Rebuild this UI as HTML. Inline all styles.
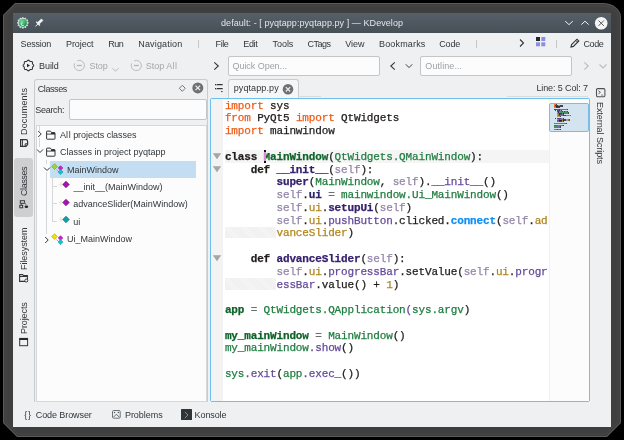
<!DOCTYPE html><html><head><meta charset="utf-8"><style>
html,body{margin:0;padding:0;width:624px;height:440px;overflow:hidden;background:#000;}
.b{position:absolute;}
.t{position:absolute;white-space:pre;line-height:1;font-family:"Liberation Sans",sans-serif;}
.c{position:absolute;white-space:pre;font-family:"Liberation Mono",monospace;}
</style></head><body><div style="position:absolute;left:0;top:0;width:624px;height:440px;will-change:transform"><svg class="b" style="left:0;top:0" width="624" height="440"><path d="M15 3 L603 3 C612 3 621 9 621 17 L621 423 L607 437 L17 437 L3 423 L3 15 Z" fill="#5a5a5a"/><path d="M15.4 4 L603 4 C611.5 4 620 9.5 620 17 L620 422.6 L606.6 436 L17.4 436 L4 422.6 L4 15.4 Z" fill="#3f3f3f"/><path d="M16 6 L603 6 C610 6 618 11 618 17.5 L618 422 L606 434 L18 434 L6 422 L6 16 Z" fill="none" stroke="#474747" stroke-width="1"/></svg><div class="b" style="left:13px;top:13px;width:598px;height:414px;background:#eff0f1"></div><div class="b" style="left:13px;top:13px;width:598px;height:20px;background:linear-gradient(#566069,#474f56)"></div><svg class="b" style="left:16px;top:16px" width="14" height="14" viewBox="0 0 14 14"><defs><radialGradient id="kg" cx="0.35" cy="0.3" r="0.8"><stop offset="0" stop-color="#6fdc9c"/><stop offset="1" stop-color="#168a48"/></radialGradient></defs><rect x="6.15" y="1.05" width="1.4" height="1.7" fill="#d4d5d6" transform="rotate(0 6.85 6.85)"/><rect x="6.15" y="1.05" width="1.4" height="1.7" fill="#d4d5d6" transform="rotate(30 6.85 6.85)"/><rect x="6.15" y="1.05" width="1.4" height="1.7" fill="#d4d5d6" transform="rotate(60 6.85 6.85)"/><rect x="6.15" y="1.05" width="1.4" height="1.7" fill="#d4d5d6" transform="rotate(90 6.85 6.85)"/><rect x="6.15" y="1.05" width="1.4" height="1.7" fill="#d4d5d6" transform="rotate(120 6.85 6.85)"/><rect x="6.15" y="1.05" width="1.4" height="1.7" fill="#d4d5d6" transform="rotate(150 6.85 6.85)"/><rect x="6.15" y="1.05" width="1.4" height="1.7" fill="#d4d5d6" transform="rotate(180 6.85 6.85)"/><rect x="6.15" y="1.05" width="1.4" height="1.7" fill="#d4d5d6" transform="rotate(210 6.85 6.85)"/><rect x="6.15" y="1.05" width="1.4" height="1.7" fill="#d4d5d6" transform="rotate(240 6.85 6.85)"/><rect x="6.15" y="1.05" width="1.4" height="1.7" fill="#d4d5d6" transform="rotate(270 6.85 6.85)"/><rect x="6.15" y="1.05" width="1.4" height="1.7" fill="#d4d5d6" transform="rotate(300 6.85 6.85)"/><rect x="6.15" y="1.05" width="1.4" height="1.7" fill="#d4d5d6" transform="rotate(330 6.85 6.85)"/><circle cx="6.85" cy="6.85" r="4.9" fill="#e4e5e6"/><circle cx="6.85" cy="6.85" r="4.1" fill="url(#kg)"/><path d="M7.8 9.7 Q5.2 10.2 5.1 7.9 Q5.3 6.5 6.7 6.9" stroke="#d8f3e2" stroke-width="1" fill="none"/></svg><svg class="b" style="left:34px;top:18px" width="10" height="10" viewBox="0 0 10 10"><path d="M1.5 8.4 L4 5.9" stroke="#f4f4f4" stroke-width="1"/><path d="M2.3 3.8 L5.9 7.4" stroke="#f4f4f4" stroke-width="1.4"/><path d="M3.6 4.6 L5.1 6.1 L8.9 2.5 L7.4 1 Z" fill="#f4f4f4" stroke="#f4f4f4" stroke-width="0.8" stroke-linejoin="round"/></svg><div class="t" style="left:221.00px;top:19.00px;font-size:9.0px;color:#e3e5e7;letter-spacing:0.067px;">default: - [ pyqtapp:pyqtapp.py ] — KDevelop</div><svg class="b" style="left:564px;top:19px" width="11" height="8" viewBox="0 0 11 8"><path d="M1.2 2.2 L5 5.6 L8.8 2.2" stroke="#eff0f1" stroke-width="1" fill="none"/></svg><svg class="b" style="left:580px;top:19px" width="11" height="8" viewBox="0 0 11 8"><path d="M1.3 5.6 L5 2.2 L8.7 5.6" stroke="#eff0f1" stroke-width="1" fill="none"/></svg><svg class="b" style="left:594px;top:16px" width="14" height="14" viewBox="0 0 14 14"><circle cx="7.2" cy="7.2" r="6.3" fill="#f4f5f5"/><path d="M4.5 4.5 L9.9 9.9 M9.9 4.5 L4.5 9.9" stroke="#525a61" stroke-width="1"/></svg><div class="t" style="left:20.60px;top:40.00px;font-size:9.0px;color:#31363b;letter-spacing:-0.217px;">Session</div><div class="t" style="left:66.00px;top:40.00px;font-size:9.0px;color:#31363b;letter-spacing:-0.067px;">Project</div><div class="t" style="left:108.30px;top:40.00px;font-size:9.0px;color:#31363b;letter-spacing:-0.550px;">Run</div><div class="t" style="left:138.30px;top:40.00px;font-size:9.0px;color:#31363b;letter-spacing:0.161px;">Navigation</div><div class="t" style="left:215.60px;top:40.00px;font-size:9.0px;color:#31363b;letter-spacing:-0.433px;">File</div><div class="t" style="left:243.30px;top:40.00px;font-size:9.0px;color:#31363b;letter-spacing:-0.367px;">Edit</div><div class="t" style="left:272.60px;top:40.00px;font-size:9.0px;color:#31363b;letter-spacing:-0.075px;">Tools</div><div class="t" style="left:307.50px;top:40.00px;font-size:9.0px;color:#31363b;letter-spacing:-0.500px;">CTags</div><div class="t" style="left:345.30px;top:40.00px;font-size:9.0px;color:#31363b;letter-spacing:-0.067px;">View</div><div class="t" style="left:379.00px;top:40.00px;font-size:9.0px;color:#31363b;letter-spacing:0.162px;">Bookmarks</div><div class="t" style="left:439.30px;top:40.00px;font-size:9.0px;color:#31363b;letter-spacing:-0.200px;">Code</div><div class="b" style="left:198px;top:40px;width:1px;height:8px;background:#c4c6c8"></div><div class="b" style="left:476px;top:40px;width:1px;height:8px;background:#c4c6c8"></div><div class="b" style="left:556px;top:40px;width:1px;height:8px;background:#c4c6c8"></div><svg class="b" style="left:518px;top:38px" width="8" height="10" viewBox="0 0 8 10"><path d="M2 1.5 L5.5 5 L2 8.5" stroke="#31363b" stroke-width="1.1" fill="none"/></svg><svg class="b" style="left:535px;top:36px" width="12" height="12" viewBox="0 0 12 12"><rect x="1" y="1" width="4" height="4" fill="#232629"/><rect x="6.3" y="1" width="4" height="4" fill="#8b8fe0"/><rect x="1" y="6.3" width="4" height="4" fill="#8b8fe0"/><rect x="6.3" y="6.3" width="4" height="4" fill="#8b8fe0"/></svg><svg class="b" style="left:569px;top:37px" width="12" height="12" viewBox="0 0 12 12"><path d="M2 10 L2.6 7.6 L8 2.2 L9.8 4 L4.4 9.4 Z" fill="none" stroke="#31363b" stroke-width="1.1"/><path d="M6.8 3.4 L8.6 5.2" stroke="#31363b" stroke-width="1"/></svg><div class="t" style="left:583.40px;top:40.00px;font-size:9.0px;color:#31363b;letter-spacing:-0.367px;">Code</div><svg class="b" style="left:21px;top:59px" width="14" height="14" viewBox="0 0 14 14"><polygon points="12.75,6.50 12.48,7.17 11.92,7.71 11.51,8.20 11.45,8.84 11.47,9.62 11.18,10.28 10.52,10.57 9.74,10.55 9.10,10.61 8.61,11.02 8.07,11.58 7.40,11.85 6.73,11.58 6.19,11.02 5.70,10.61 5.06,10.55 4.28,10.57 3.62,10.28 3.33,9.62 3.35,8.84 3.29,8.20 2.88,7.71 2.32,7.17 2.05,6.50 2.32,5.83 2.88,5.29 3.29,4.80 3.35,4.16 3.33,3.38 3.62,2.72 4.28,2.43 5.06,2.45 5.70,2.39 6.19,1.98 6.73,1.42 7.40,1.15 8.07,1.42 8.61,1.98 9.10,2.39 9.74,2.45 10.52,2.43 11.18,2.72 11.47,3.38 11.45,4.16 11.51,4.80 11.92,5.29 12.48,5.83" fill="none" stroke="#31363b" stroke-width="1.05"/><path d="M6 4.7 L9 6.5 L6 8.3 Z" fill="#232629"/></svg><div class="t" style="left:39.00px;top:62.00px;font-size:9.0px;color:#31363b;letter-spacing:-0.050px;">Build</div><svg class="b" style="left:72px;top:59px" width="14" height="14" viewBox="0 0 14 14"><path d="M5.14 1.88 A5.1 5.1 0 1 1 2.68 4.34" fill="none" stroke="#b9bbbd" stroke-width="1"/><path d="M4.8 6.5 L9.8 6.5" stroke="#b3b5b7" stroke-width="1.3"/></svg><div class="t" style="left:89.60px;top:62.00px;font-size:9.0px;color:#a5a7a9;letter-spacing:-0.133px;">Stop</div><svg class="b" style="left:111px;top:67px" width="9" height="6" viewBox="0 0 9 6"><path d="M1.5 1.2 L4.5 4.2 L7.5 1.2" stroke="#b5b7b9" stroke-width="1" fill="none"/></svg><svg class="b" style="left:128.5px;top:59px" width="14" height="14" viewBox="0 0 14 14"><path d="M5.14 1.88 A5.1 5.1 0 1 1 2.68 4.34" fill="none" stroke="#b9bbbd" stroke-width="1"/><path d="M4.8 6.5 L9.8 6.5" stroke="#b3b5b7" stroke-width="1.3"/></svg><div class="t" style="left:145.70px;top:62.00px;font-size:9.0px;color:#a5a7a9;letter-spacing:0.029px;">Stop A<span style="letter-spacing:0.7px">l</span>l</div><svg class="b" style="left:212px;top:61px" width="9" height="10" viewBox="0 0 9 10"><path d="M2.3 1.3 L6.3 5 L2.3 8.7" stroke="#31363b" stroke-width="1.1" fill="none"/></svg><div class="b" style="left:228px;top:56px;width:152px;height:20px;background:#fcfcfc;border:1px solid #c3c5c7;border-radius:2px;box-sizing:border-box"></div><div class="t" style="left:232.50px;top:62.00px;font-size:9.0px;color:#9fa1a3;letter-spacing:-0.046px;">Quick Open...</div><svg class="b" style="left:388px;top:61px" width="9" height="10" viewBox="0 0 9 10"><path d="M6.8 1.3 L2.8 5 L6.8 8.7" stroke="#31363b" stroke-width="1.1" fill="none"/></svg><svg class="b" style="left:404px;top:63px" width="10" height="7" viewBox="0 0 10 7"><path d="M1.8 1.3 L5 4.6 L8.2 1.3" stroke="#31363b" stroke-width="0.95" fill="none"/></svg><div class="b" style="left:420px;top:56px;width:152px;height:20px;background:#fcfcfc;border:1px solid #c3c5c7;border-radius:2px;box-sizing:border-box"></div><div class="t" style="left:425.30px;top:62.00px;font-size:9.0px;color:#9fa1a3;letter-spacing:0.089px;">Outline...</div><svg class="b" style="left:582px;top:61px" width="9" height="10" viewBox="0 0 9 10"><path d="M2.3 1.3 L6.3 5 L2.3 8.7" stroke="#b9bbbd" stroke-width="1.1" fill="none"/></svg><svg class="b" style="left:598px;top:63px" width="10" height="7" viewBox="0 0 10 7"><path d="M1.5 1.5 L5 5 L8.5 1.5" stroke="#b9bbbd" stroke-width="1.1" fill="none"/></svg><div class="b" style="left:14px;top:158px;width:19px;height:59px;background:#cdcfd1;border-radius:3px"></div><div class="t" style="left:28.2px;top:134.5px;font-size:9.0px;color:#31363b;letter-spacing:0.175px;transform-origin:0 0;transform:rotate(-90deg) translate(-0.00px,-7.62px)">Documents</div><div class="t" style="left:28.2px;top:195.5px;font-size:9.0px;color:#31363b;letter-spacing:-0.417px;transform-origin:0 0;transform:rotate(-90deg) translate(-0.00px,-7.62px)">Classes</div><div class="t" style="left:28.2px;top:269.5px;font-size:9.0px;color:#31363b;letter-spacing:-0.056px;transform-origin:0 0;transform:rotate(-90deg) translate(-0.00px,-7.62px)">Filesystem</div><div class="t" style="left:28.2px;top:333.6px;font-size:9.0px;color:#31363b;letter-spacing:-0.100px;transform-origin:0 0;transform:rotate(-90deg) translate(-0.00px,-7.62px)">Projects</div><svg class="b" style="left:18px;top:137px" width="11" height="11" viewBox="0 0 11 11"><path d="M2.6 2.6 L8 2.6 Q9.6 2.6 9.6 4.4 L9.6 7.6 L8 9.4 L2.6 9.4 Z" fill="none" stroke="#31363b" stroke-width="1.2"/><path d="M4.4 2.6 L4.4 9.4" stroke="#31363b" stroke-width="1"/><path d="M7.2 9.4 L7.2 6.8 L9.6 6.8" fill="none" stroke="#31363b" stroke-width="1"/></svg><svg class="b" style="left:18px;top:199px" width="11" height="11" viewBox="0 0 11 11"><rect x="2.3" y="1.7" width="4.2" height="2.6" fill="none" stroke="#31363b" stroke-width="0.95"/><rect x="1.8" y="6.3" width="2.9" height="2.5" fill="none" stroke="#31363b" stroke-width="0.95"/><ellipse cx="8.4" cy="7.7" rx="1.8" ry="1.25" fill="#232629"/><path d="M3.3 4.3 L3.3 6.3" stroke="#31363b" stroke-width="0.8"/><path d="M6.5 3 L8.2 6.4" stroke="#6a6d70" stroke-width="0.9"/></svg><svg class="b" style="left:18px;top:273px" width="11" height="11" viewBox="0 0 11 11"><path d="M1.6 1.5 L4.6 1.5 L5.6 2.6 L9.4 2.6 L9.4 8.4 L1.6 8.4 Z" fill="none" stroke="#31363b" stroke-width="1.1"/><path d="M1.6 3.4 L9.4 3.4" stroke="#31363b" stroke-width="1.2"/><circle cx="8.3" cy="7.6" r="1.5" fill="#eff0f1" stroke="#31363b" stroke-width="0.9"/></svg><svg class="b" style="left:18px;top:337px" width="11" height="11" viewBox="0 0 11 11"><rect x="1.7" y="1.4" width="7.9" height="7.3" fill="none" stroke="#31363b" stroke-width="1"/><rect x="1.5" y="1.2" width="8.3" height="1.8" fill="#232629"/></svg><div class="b" style="left:34px;top:79px;width:174px;height:323px;border:1px solid #c9cbcd;border-bottom:none;border-radius:3px 3px 0 0;box-sizing:border-box;background:#eff0f1"></div><div class="t" style="left:37.70px;top:85.00px;font-size:9.0px;color:#31363b;letter-spacing:-0.400px;">Classes</div><svg class="b" style="left:178px;top:84px" width="9" height="9" viewBox="0 0 9 9"><path d="M4.3 1.3 L7.3 4.3 L4.3 7.3 L1.3 4.3 Z" fill="none" stroke="#5d6064" stroke-width="0.85"/></svg><svg class="b" style="left:191px;top:81px" width="14" height="14" viewBox="0 0 14 14"><circle cx="6.8" cy="6.9" r="5.5" fill="#6e7174"/><path d="M4.5 4.6 L9.1 9.2 M9.1 4.6 L4.5 9.2" stroke="#eff0f1" stroke-width="1.2"/></svg><div class="t" style="left:35.30px;top:106.00px;font-size:9.0px;color:#31363b;letter-spacing:-0.300px;">Search:</div><div class="b" style="left:69px;top:99px;width:138px;height:21px;background:#fcfcfc;border:1px solid #c3c5c7;border-radius:2px;box-sizing:border-box"></div><div class="b" style="left:36px;top:125px;width:171px;height:277px;background:#fcfcfc;border:1px solid #d5d7d9;box-sizing:border-box"></div><div class="b" style="left:50px;top:160.5px;width:146px;height:17.19999999999999px;background:#c3def3"></div><div class="b" style="left:39px;top:126px;width:1px;height:5px;background:#d4d5d6"></div><div class="b" style="left:39px;top:138px;width:1px;height:9px;background:#d4d5d6"></div><div class="b" style="left:46px;top:160px;width:1px;height:4px;background:#d4d5d6"></div><div class="b" style="left:46px;top:172px;width:1px;height:62px;background:#d6d7d8"></div><div class="b" style="left:52px;top:178px;width:1px;height:44px;background:#d6d7d8"></div><div class="b" style="left:53px;top:186px;width:4px;height:1px;background:#d6d7d8"></div><div class="b" style="left:53px;top:203px;width:4px;height:1px;background:#d6d7d8"></div><div class="b" style="left:53px;top:221px;width:4px;height:1px;background:#d6d7d8"></div><svg class="b" style="left:37px;top:130.2px" width="6" height="8" viewBox="0 0 6 8"><path d="M1.2 1 L4.2 4 L1.2 7" stroke="#31363b" stroke-width="1" fill="none"/></svg><svg class="b" style="left:36px;top:148px" width="8" height="7" viewBox="0 0 8 7"><path d="M1 1.5 L4 4.5 L7 1.5" stroke="#31363b" stroke-width="1" fill="none"/></svg><svg class="b" style="left:42.5px;top:166px" width="8" height="7" viewBox="0 0 8 7"><path d="M1 1.5 L4 4.5 L7 1.5" stroke="#31363b" stroke-width="1" fill="none"/></svg><svg class="b" style="left:43.5px;top:235.5px" width="6" height="8" viewBox="0 0 6 8"><path d="M1.2 1 L4.2 4 L1.2 7" stroke="#31363b" stroke-width="1" fill="none"/></svg><svg class="b" style="left:45.5px;top:129.5px" width="10" height="10" viewBox="0 0 10 10"><path d="M1.1 1.1 L4.4 1.1 L5.5 2.6 L8.5 2.6 Q9 2.6 9 3.1 L9 8.7 Q9 9.2 8.5 9.2 L1.1 9.2 Q0.6 9.2 0.6 8.7 L0.6 1.6 Q0.6 1.1 1.1 1.1 Z" fill="none" stroke="#31363b" stroke-width="1"/><path d="M5 3.3 L9 3.3" stroke="#232629" stroke-width="1.3"/><path d="M0.6 4.1 L9 4.1" stroke="#31363b" stroke-width="0.9"/></svg><svg class="b" style="left:45.5px;top:146.5px" width="10" height="10" viewBox="0 0 10 10"><path d="M1.1 1.1 L4.4 1.1 L5.5 2.6 L8.5 2.6 Q9 2.6 9 3.1 L9 8.7 Q9 9.2 8.5 9.2 L1.1 9.2 Q0.6 9.2 0.6 8.7 L0.6 1.6 Q0.6 1.1 1.1 1.1 Z" fill="none" stroke="#31363b" stroke-width="1"/><path d="M5 3.3 L9 3.3" stroke="#232629" stroke-width="1.3"/><path d="M0.6 4.1 L9 4.1" stroke="#31363b" stroke-width="0.9"/></svg><svg class="b" style="left:50px;top:162px" width="14" height="14" viewBox="0 0 14 14"><path d="M6.5 7.5 L8.5 9.5" stroke="#9aa8b0" stroke-width="1"/><path d="M4.5 1.6999999999999997 L7.4 4.6 L4.5 7.5 L1.6 4.6 Z" fill="#a0d040" stroke="#70a020" stroke-width="0.6"/><path d="M10.5 3.7 L12.8 6 L10.5 8.3 L8.2 6 Z" fill="#d020d0" stroke="#a000a0" stroke-width="0.6"/><path d="M10.5 7.6 L13.0 10.1 L10.5 12.6 L8.0 10.1 Z" fill="#10c4d4" stroke="#0898a8" stroke-width="0.6"/></svg><svg class="b" style="left:50px;top:232.3px" width="14" height="14" viewBox="0 0 14 14"><path d="M6.5 7.5 L8.5 9.5" stroke="#9aa8b0" stroke-width="1"/><path d="M4.5 1.6999999999999997 L7.4 4.6 L4.5 7.5 L1.6 4.6 Z" fill="#e8e010" stroke="#b0a800" stroke-width="0.6"/><path d="M10.5 3.7 L12.8 6 L10.5 8.3 L8.2 6 Z" fill="#d020d0" stroke="#a000a0" stroke-width="0.6"/><path d="M10.5 7.6 L13.0 10.1 L10.5 12.6 L8.0 10.1 Z" fill="#10c4d4" stroke="#0898a8" stroke-width="0.6"/></svg><svg class="b" style="left:58px;top:180.3px" width="14" height="10" viewBox="0 0 14 10"><path d="M1 4.4 L4.4 4.4 M1.6 5.9 L4 5.9" stroke="#ebe6a8" stroke-width="0.9"/><path d="M2.2 3 L3.8 3" stroke="#b8dce0" stroke-width="0.8"/><path d="M8 1.2000000000000002 L11.3 4.5 L8 7.8 L4.7 4.5 Z" fill="#a810b8" stroke="#600070" stroke-width="0.6"/></svg><svg class="b" style="left:58px;top:197.8px" width="14" height="10" viewBox="0 0 14 10"><path d="M1 4.4 L4.4 4.4 M1.6 5.9 L4 5.9" stroke="#ebe6a8" stroke-width="0.9"/><path d="M2.2 3 L3.8 3" stroke="#b8dce0" stroke-width="0.8"/><path d="M8 1.2000000000000002 L11.3 4.5 L8 7.8 L4.7 4.5 Z" fill="#a810b8" stroke="#600070" stroke-width="0.6"/></svg><svg class="b" style="left:58px;top:215.1px" width="14" height="10" viewBox="0 0 14 10"><path d="M1 4.4 L4.4 4.4 M1.6 5.9 L4 5.9" stroke="#ebe6a8" stroke-width="0.9"/><path d="M2.2 3 L3.8 3" stroke="#b8dce0" stroke-width="0.8"/><path d="M8 1.2000000000000002 L11.3 4.5 L8 7.8 L4.7 4.5 Z" fill="#10a0a8" stroke="#006068" stroke-width="0.6"/></svg><div class="t" style="left:60.10px;top:131.00px;font-size:9.0px;color:#31363b;letter-spacing:-0.050px;">A<span style="letter-spacing:0.7px">l</span>l projects classes</div><div class="t" style="left:60.00px;top:148.00px;font-size:9.0px;color:#31363b;letter-spacing:0.000px;">Classes in project pyqtapp</div><div class="t" style="left:66.90px;top:166.00px;font-size:9.0px;color:#31363b;letter-spacing:0.000px;">MainWindow</div><div class="t" style="left:73.45px;top:183.00px;font-size:9.0px;color:#31363b;letter-spacing:0.000px;">__init__(MainWindow)</div><div class="t" style="left:73.30px;top:200.00px;font-size:9.0px;color:#31363b;letter-spacing:0.000px;">advanceSlider(MainWindow)</div><div class="t" style="left:73.30px;top:218.00px;font-size:9.0px;color:#31363b;letter-spacing:0.000px;">ui</div><div class="t" style="left:66.90px;top:235.00px;font-size:9.0px;color:#31363b;letter-spacing:0.000px;">Ui_MainWindow</div><svg class="b" style="left:213px;top:82px" width="12" height="11" viewBox="0 0 12 11"><path d="M2 2.6 L9.7 2.6 M2 6.7 L9.7 6.7" stroke="#31363b" stroke-width="1.3"/><path d="M3 2.6 L3.6 2.6 M3 6.7 L3.6 6.7" stroke="#eff0f1" stroke-width="1.3"/><path d="M8 9.6 L9.7 9.6" stroke="#31363b" stroke-width="0.9"/></svg><div class="b" style="left:228px;top:79px;width:71px;height:20px;background:#f5f6f7;border:1px solid #c9cbcd;border-bottom:none;border-radius:3px 3px 0 0;box-sizing:border-box"></div><div class="t" style="left:233.70px;top:84.00px;font-size:9.0px;color:#31363b;letter-spacing:0.106px;">pyqtapp.py</div><svg class="b" style="left:281px;top:82px" width="14" height="14" viewBox="0 0 14 14"><circle cx="7" cy="7.3" r="5.3" fill="#6e7174"/><path d="M4.8 5.1 L9.2 9.5 M9.2 5.1 L4.8 9.5" stroke="#eff0f1" stroke-width="1.2"/></svg><div class="t" style="left:536.40px;top:84.00px;font-size:9.0px;color:#31363b;letter-spacing:-0.112px;">Line: 5 Col: 7</div><div class="b" style="left:210px;top:98px;width:380px;height:304px;background:#fff;border:1px solid #6cc0ee;border-radius:2px;box-sizing:border-box"></div><div class="b" style="left:298px;top:96px;width:23px;height:1px;background:#d9dbdd"></div><div class="b" style="left:507px;top:96px;width:81px;height:1px;background:#d9dbdd"></div><div class="b" style="left:211px;top:99px;width:12px;height:302px;background:#f3f3f3"></div><div class="b" style="left:549px;top:99px;width:40px;height:302px;background:#fcfcfc;border-left:1px solid #f1f1f1;box-sizing:border-box"></div><div class="b" style="left:549px;top:103px;width:40px;height:29px;background:#d3e3ef;border:1px solid #79bde6;border-radius:2px;box-sizing:border-box"></div><svg class="b" style="left:595px;top:87px" width="12" height="12" viewBox="0 0 12 12"><rect x="1.5" y="1.6" width="8.4" height="8.1" rx="1.2" fill="none" stroke="#4d5054" stroke-width="1.05"/><path d="M3.4 3.7 L5.4 5.3 L3.4 6.9" fill="none" stroke="#4d5054" stroke-width="0.9"/><path d="M6 8.1 L8.2 8.1" stroke="#6d7074" stroke-width="0.8"/></svg><div class="t" style="left:596.4px;top:101.6px;font-size:9.0px;color:#31363b;letter-spacing:-0.067px;transform-origin:0 0;transform:rotate(90deg) translate(-0.00px,-7.62px)">External Scripts</div><div class="t" style="left:24.20px;top:411.00px;font-size:9.0px;color:#31363b;letter-spacing:0.800px;">{}</div><div class="t" style="left:35.80px;top:411.00px;font-size:9.0px;color:#31363b;letter-spacing:-0.091px;">Code Browser</div><svg class="b" style="left:111px;top:409px" width="11" height="11" viewBox="0 0 11 11"><rect x="1.5" y="1.5" width="7.7" height="7.7" rx="1.2" fill="none" stroke="#6f7275" stroke-width="1"/><circle cx="3.5" cy="3.5" r="0.75" fill="#55585b"/><circle cx="7.3" cy="3.5" r="0.75" fill="#55585b"/><path d="M2.6 8 L5.4 5.2 L8.1 8" fill="none" stroke="#55585b" stroke-width="0.9"/></svg><div class="t" style="left:124.90px;top:411.00px;font-size:9.0px;color:#31363b;letter-spacing:-0.014px;">Problems</div><div class="b" style="left:181px;top:409px;width:11px;height:11px;background:#2f3437;border-radius:0.5px"></div><svg class="b" style="left:181px;top:409px" width="11" height="11" viewBox="0 0 11 11"><path d="M3.9 2.9 L7 6 L3.9 9" stroke="#8d9a9b" stroke-width="0.9" fill="none"/></svg><div class="t" style="left:194.60px;top:411.00px;font-size:9.0px;color:#31363b;letter-spacing:-0.100px;">Konsole</div><div class="b" style="left:224.5px;top:149.8px;width:324.5px;height:12.9px;background:#f5f5f5"></div><div class="b" style="left:224.5px;top:226.80px;width:51.5px;height:11.6px;background:repeating-linear-gradient(45deg,#efefef 0 1px,#f6f6f6 1px 2px)"></div><div class="b" style="left:224.5px;top:277.92px;width:51.5px;height:11.6px;background:repeating-linear-gradient(45deg,#efefef 0 1px,#f6f6f6 1px 2px)"></div><svg class="b" style="left:212px;top:152.72px" width="10" height="8"><path d="M0.8 0.3 L9.2 0.3 L5 6.2 Z" fill="#a3a5a7"/></svg><svg class="b" style="left:212px;top:165.50px" width="10" height="8"><path d="M0.8 0.3 L9.2 0.3 L5 6.2 Z" fill="#a3a5a7"/></svg><svg class="b" style="left:212px;top:254.96px" width="10" height="8"><path d="M0.8 0.3 L9.2 0.3 L5 6.2 Z" fill="#a3a5a7"/></svg><div class="b" style="left:0;top:0;width:549px;height:440px;overflow:hidden;will-change:transform"><div class="c" style="left:224.9px;top:98.67px;font-size:11.0px;line-height:14px;-webkit-text-stroke:0.25px;letter-spacing:-0.148px"><span style="color:#f05a14">import</span><span style="color:#1f1c1b"> sys</span></div><div class="c" style="left:224.9px;top:111.45px;font-size:11.0px;line-height:14px;-webkit-text-stroke:0.25px;letter-spacing:-0.148px"><span style="color:#f05a14">from</span><span style="color:#1f1c1b"> PyQt5 </span><span style="color:#f05a14">import</span><span style="color:#1f1c1b"> QtWidgets</span></div><div class="c" style="left:224.9px;top:124.23px;font-size:11.0px;line-height:14px;-webkit-text-stroke:0.25px;letter-spacing:-0.148px"><span style="color:#f05a14">import</span><span style="color:#1f1c1b"> mainwindow</span></div><div class="c" style="left:224.9px;top:149.79px;font-size:11.0px;line-height:14px;-webkit-text-stroke:0.25px;letter-spacing:-0.148px"><span style="color:#1f1c1b;font-weight:bold">class</span><span style="color:#1f1c1b"> </span><span style="color:#0f6229;font-weight:bold">MainWindow</span><span style="color:#1f1c1b">(</span><span style="color:#1f7d40">QtWidgets.QMainWindow</span><span style="color:#1f1c1b">):</span></div><div class="c" style="left:224.9px;top:162.57px;font-size:11.0px;line-height:14px;-webkit-text-stroke:0.25px;letter-spacing:-0.148px"><span style="color:#1f1c1b">    </span><span style="color:#1f1c1b;font-weight:bold">def</span><span style="color:#1f1c1b"> </span><span style="color:#35206e;font-weight:bold">__init__</span><span style="color:#1f1c1b">(</span><span style="color:#9485a8">self</span><span style="color:#1f1c1b">):</span></div><div class="c" style="left:224.9px;top:175.35px;font-size:11.0px;line-height:14px;-webkit-text-stroke:0.25px;letter-spacing:-0.148px"><span style="color:#1f1c1b">        </span><span style="color:#35206e;font-weight:bold">super</span><span style="color:#1f1c1b">(</span><span style="color:#1f7d40">MainWindow</span><span style="color:#1f1c1b">, </span><span style="color:#9485a8">self</span><span style="color:#1f1c1b">).</span><span style="color:#644a9b">__init__</span><span style="color:#1f1c1b">()</span></div><div class="c" style="left:224.9px;top:188.13px;font-size:11.0px;line-height:14px;-webkit-text-stroke:0.25px;letter-spacing:-0.148px"><span style="color:#1f1c1b">        </span><span style="color:#9485a8">self</span><span style="color:#1f1c1b">.</span><span style="color:#2a2668;font-weight:bold">ui</span><span style="color:#6f6f6f"> = </span><span style="color:#1f7d40">mainwindow.Ui_MainWindow</span><span style="color:#1f1c1b">()</span></div><div class="c" style="left:224.9px;top:200.91px;font-size:11.0px;line-height:14px;-webkit-text-stroke:0.25px;letter-spacing:-0.148px"><span style="color:#1f1c1b">        </span><span style="color:#9485a8">self</span><span style="color:#1f1c1b">.</span><span style="color:#b0851c">ui</span><span style="color:#1f1c1b">.</span><span style="color:#35206e;font-weight:bold">setupUi</span><span style="color:#1f1c1b">(</span><span style="color:#9485a8">self</span><span style="color:#1f1c1b">)</span></div><div class="c" style="left:224.9px;top:213.69px;font-size:11.0px;line-height:14px;-webkit-text-stroke:0.25px;letter-spacing:-0.148px"><span style="color:#1f1c1b">        </span><span style="color:#9485a8">self</span><span style="color:#1f1c1b">.</span><span style="color:#b0851c">ui</span><span style="color:#1f1c1b">.</span><span style="color:#644a9b">pushButton</span><span style="color:#1f1c1b">.clicked.</span><span style="color:#0b8ef5;font-weight:bold">connect</span><span style="color:#1f1c1b">(</span><span style="color:#9485a8">self</span><span style="color:#1f1c1b">.</span><span style="color:#b0851c">ad</span></div><div class="c" style="left:224.9px;top:226.47px;font-size:11.0px;line-height:14px;-webkit-text-stroke:0.25px;letter-spacing:-0.148px"><span style="color:#1f1c1b">        </span><span style="color:#b0851c">vanceSlider</span><span style="color:#1f1c1b">)</span></div><div class="c" style="left:224.9px;top:252.03px;font-size:11.0px;line-height:14px;-webkit-text-stroke:0.25px;letter-spacing:-0.148px"><span style="color:#1f1c1b">    </span><span style="color:#1f1c1b;font-weight:bold">def</span><span style="color:#1f1c1b"> </span><span style="color:#35206e;font-weight:bold">advanceSlider</span><span style="color:#1f1c1b">(</span><span style="color:#9485a8">self</span><span style="color:#1f1c1b">):</span></div><div class="c" style="left:224.9px;top:264.81px;font-size:11.0px;line-height:14px;-webkit-text-stroke:0.25px;letter-spacing:-0.148px"><span style="color:#1f1c1b">        </span><span style="color:#9485a8">self</span><span style="color:#1f1c1b">.</span><span style="color:#b0851c">ui</span><span style="color:#1f1c1b">.</span><span style="color:#644a9b">progressBar</span><span style="color:#1f1c1b">.setValue(</span><span style="color:#9485a8">self</span><span style="color:#1f1c1b">.</span><span style="color:#b0851c">ui</span><span style="color:#1f1c1b">.</span><span style="color:#644a9b">progr</span></div><div class="c" style="left:224.9px;top:277.59px;font-size:11.0px;line-height:14px;-webkit-text-stroke:0.25px;letter-spacing:-0.148px"><span style="color:#1f1c1b">        </span><span style="color:#644a9b">essBar</span><span style="color:#1f1c1b">.value() + </span><span style="color:#b0851c">1</span><span style="color:#1f1c1b">)</span></div><div class="c" style="left:224.9px;top:303.15px;font-size:11.0px;line-height:14px;-webkit-text-stroke:0.25px;letter-spacing:-0.148px"><span style="color:#0f6229;font-weight:bold">app</span><span style="color:#6f6f6f"> = </span><span style="color:#1f7d40">QtWidgets.QApplication</span><span style="color:#644a9b">(</span><span style="color:#1f7d40">sys.argv</span><span style="color:#1f1c1b">)</span></div><div class="c" style="left:224.9px;top:328.71px;font-size:11.0px;line-height:14px;-webkit-text-stroke:0.25px;letter-spacing:-0.148px"><span style="color:#0f6229;font-weight:bold">my_mainWindow</span><span style="color:#6f6f6f"> = </span><span style="color:#1f7d40">MainWindow</span><span style="color:#1f1c1b">()</span></div><div class="c" style="left:224.9px;top:341.49px;font-size:11.0px;line-height:14px;-webkit-text-stroke:0.25px;letter-spacing:-0.148px"><span style="color:#1f7d40">my_mainWindow</span><span style="color:#644a9b">.show</span><span style="color:#1f1c1b">()</span></div><div class="c" style="left:224.9px;top:367.05px;font-size:11.0px;line-height:14px;-webkit-text-stroke:0.25px;letter-spacing:-0.148px"><span style="color:#1f7d40">sys</span><span style="color:#644a9b">.exit</span><span style="color:#1f1c1b">(</span><span style="color:#1f7d40">app</span><span style="color:#644a9b">.exec_</span><span style="color:#1f1c1b">())</span></div></div><div class="b" style="left:263.81px;top:150px;width:1.8px;height:12.6px;background:linear-gradient(#111 0 2px,#e08ad4 2px 10.6px,#111 10.6px)"></div><div class="b" style="left:554.00px;top:104.00px;width:1.98px;height:1.4px;background:#f05a14;opacity:0.8"></div><div class="b" style="left:555.98px;top:104.00px;width:1.32px;height:1.4px;background:#1f1c1b;opacity:0.8"></div><div class="b" style="left:554.00px;top:105.17px;width:1.32px;height:1.4px;background:#f05a14;opacity:0.8"></div><div class="b" style="left:555.32px;top:105.17px;width:2.31px;height:1.4px;background:#1f1c1b;opacity:0.8"></div><div class="b" style="left:557.63px;top:105.17px;width:1.98px;height:1.4px;background:#f05a14;opacity:0.8"></div><div class="b" style="left:559.61px;top:105.17px;width:3.30px;height:1.4px;background:#1f1c1b;opacity:0.8"></div><div class="b" style="left:554.00px;top:106.34px;width:1.98px;height:1.4px;background:#f05a14;opacity:0.8"></div><div class="b" style="left:555.98px;top:106.34px;width:3.63px;height:1.4px;background:#1f1c1b;opacity:0.8"></div><div class="b" style="left:554.00px;top:108.68px;width:1.65px;height:1.4px;background:#1f1c1b;opacity:0.8"></div><div class="b" style="left:555.98px;top:108.68px;width:3.30px;height:1.4px;background:#0f6229;opacity:0.8"></div><div class="b" style="left:559.28px;top:108.68px;width:0.33px;height:1.4px;background:#1f1c1b;opacity:0.8"></div><div class="b" style="left:559.61px;top:108.68px;width:6.93px;height:1.4px;background:#1f7d40;opacity:0.8"></div><div class="b" style="left:566.54px;top:108.68px;width:0.66px;height:1.4px;background:#1f1c1b;opacity:0.8"></div><div class="b" style="left:555.32px;top:109.85px;width:0.99px;height:1.4px;background:#1f1c1b;opacity:0.8"></div><div class="b" style="left:556.64px;top:109.85px;width:2.64px;height:1.4px;background:#35206e;opacity:0.8"></div><div class="b" style="left:559.28px;top:109.85px;width:0.33px;height:1.4px;background:#1f1c1b;opacity:0.8"></div><div class="b" style="left:559.61px;top:109.85px;width:1.32px;height:1.4px;background:#9485a8;opacity:0.8"></div><div class="b" style="left:560.93px;top:109.85px;width:0.66px;height:1.4px;background:#1f1c1b;opacity:0.8"></div><div class="b" style="left:556.64px;top:111.02px;width:1.65px;height:1.4px;background:#35206e;opacity:0.8"></div><div class="b" style="left:558.29px;top:111.02px;width:0.33px;height:1.4px;background:#1f1c1b;opacity:0.8"></div><div class="b" style="left:558.62px;top:111.02px;width:3.30px;height:1.4px;background:#1f7d40;opacity:0.8"></div><div class="b" style="left:561.92px;top:111.02px;width:0.66px;height:1.4px;background:#1f1c1b;opacity:0.8"></div><div class="b" style="left:562.58px;top:111.02px;width:1.32px;height:1.4px;background:#9485a8;opacity:0.8"></div><div class="b" style="left:563.90px;top:111.02px;width:0.66px;height:1.4px;background:#1f1c1b;opacity:0.8"></div><div class="b" style="left:564.56px;top:111.02px;width:2.64px;height:1.4px;background:#644a9b;opacity:0.8"></div><div class="b" style="left:567.20px;top:111.02px;width:0.66px;height:1.4px;background:#1f1c1b;opacity:0.8"></div><div class="b" style="left:556.64px;top:112.19px;width:1.32px;height:1.4px;background:#9485a8;opacity:0.8"></div><div class="b" style="left:557.96px;top:112.19px;width:0.33px;height:1.4px;background:#1f1c1b;opacity:0.8"></div><div class="b" style="left:558.29px;top:112.19px;width:0.66px;height:1.4px;background:#2a2668;opacity:0.8"></div><div class="b" style="left:558.95px;top:112.19px;width:0.99px;height:1.4px;background:#6f6f6f;opacity:0.8"></div><div class="b" style="left:559.94px;top:112.19px;width:7.92px;height:1.4px;background:#1f7d40;opacity:0.8"></div><div class="b" style="left:567.86px;top:112.19px;width:0.66px;height:1.4px;background:#1f1c1b;opacity:0.8"></div><div class="b" style="left:556.64px;top:113.36px;width:1.32px;height:1.4px;background:#9485a8;opacity:0.8"></div><div class="b" style="left:557.96px;top:113.36px;width:0.33px;height:1.4px;background:#1f1c1b;opacity:0.8"></div><div class="b" style="left:558.29px;top:113.36px;width:0.66px;height:1.4px;background:#b0851c;opacity:0.8"></div><div class="b" style="left:558.95px;top:113.36px;width:0.33px;height:1.4px;background:#1f1c1b;opacity:0.8"></div><div class="b" style="left:559.28px;top:113.36px;width:2.31px;height:1.4px;background:#35206e;opacity:0.8"></div><div class="b" style="left:561.59px;top:113.36px;width:0.33px;height:1.4px;background:#1f1c1b;opacity:0.8"></div><div class="b" style="left:561.92px;top:113.36px;width:1.32px;height:1.4px;background:#9485a8;opacity:0.8"></div><div class="b" style="left:563.24px;top:113.36px;width:0.33px;height:1.4px;background:#1f1c1b;opacity:0.8"></div><div class="b" style="left:556.64px;top:114.53px;width:1.32px;height:1.4px;background:#9485a8;opacity:0.8"></div><div class="b" style="left:557.96px;top:114.53px;width:0.33px;height:1.4px;background:#1f1c1b;opacity:0.8"></div><div class="b" style="left:558.29px;top:114.53px;width:0.66px;height:1.4px;background:#b0851c;opacity:0.8"></div><div class="b" style="left:558.95px;top:114.53px;width:0.33px;height:1.4px;background:#1f1c1b;opacity:0.8"></div><div class="b" style="left:559.28px;top:114.53px;width:3.30px;height:1.4px;background:#644a9b;opacity:0.8"></div><div class="b" style="left:562.58px;top:114.53px;width:2.97px;height:1.4px;background:#1f1c1b;opacity:0.8"></div><div class="b" style="left:565.55px;top:114.53px;width:2.31px;height:1.4px;background:#0b8ef5;opacity:0.8"></div><div class="b" style="left:567.86px;top:114.53px;width:0.33px;height:1.4px;background:#1f1c1b;opacity:0.8"></div><div class="b" style="left:568.19px;top:114.53px;width:1.32px;height:1.4px;background:#9485a8;opacity:0.8"></div><div class="b" style="left:569.51px;top:114.53px;width:0.33px;height:1.4px;background:#1f1c1b;opacity:0.8"></div><div class="b" style="left:569.84px;top:114.53px;width:0.66px;height:1.4px;background:#b0851c;opacity:0.8"></div><div class="b" style="left:556.64px;top:115.70px;width:3.63px;height:1.4px;background:#b0851c;opacity:0.8"></div><div class="b" style="left:560.27px;top:115.70px;width:0.33px;height:1.4px;background:#1f1c1b;opacity:0.8"></div><div class="b" style="left:555.32px;top:118.04px;width:0.99px;height:1.4px;background:#1f1c1b;opacity:0.8"></div><div class="b" style="left:556.64px;top:118.04px;width:4.29px;height:1.4px;background:#35206e;opacity:0.8"></div><div class="b" style="left:560.93px;top:118.04px;width:0.33px;height:1.4px;background:#1f1c1b;opacity:0.8"></div><div class="b" style="left:561.26px;top:118.04px;width:1.32px;height:1.4px;background:#9485a8;opacity:0.8"></div><div class="b" style="left:562.58px;top:118.04px;width:0.66px;height:1.4px;background:#1f1c1b;opacity:0.8"></div><div class="b" style="left:556.64px;top:119.21px;width:1.32px;height:1.4px;background:#9485a8;opacity:0.8"></div><div class="b" style="left:557.96px;top:119.21px;width:0.33px;height:1.4px;background:#1f1c1b;opacity:0.8"></div><div class="b" style="left:558.29px;top:119.21px;width:0.66px;height:1.4px;background:#b0851c;opacity:0.8"></div><div class="b" style="left:558.95px;top:119.21px;width:0.33px;height:1.4px;background:#1f1c1b;opacity:0.8"></div><div class="b" style="left:559.28px;top:119.21px;width:3.63px;height:1.4px;background:#644a9b;opacity:0.8"></div><div class="b" style="left:562.91px;top:119.21px;width:3.30px;height:1.4px;background:#1f1c1b;opacity:0.8"></div><div class="b" style="left:566.21px;top:119.21px;width:1.32px;height:1.4px;background:#9485a8;opacity:0.8"></div><div class="b" style="left:567.53px;top:119.21px;width:0.33px;height:1.4px;background:#1f1c1b;opacity:0.8"></div><div class="b" style="left:567.86px;top:119.21px;width:0.66px;height:1.4px;background:#b0851c;opacity:0.8"></div><div class="b" style="left:568.52px;top:119.21px;width:0.33px;height:1.4px;background:#1f1c1b;opacity:0.8"></div><div class="b" style="left:568.85px;top:119.21px;width:1.65px;height:1.4px;background:#644a9b;opacity:0.8"></div><div class="b" style="left:556.64px;top:120.38px;width:1.98px;height:1.4px;background:#644a9b;opacity:0.8"></div><div class="b" style="left:558.62px;top:120.38px;width:3.63px;height:1.4px;background:#1f1c1b;opacity:0.8"></div><div class="b" style="left:562.25px;top:120.38px;width:0.33px;height:1.4px;background:#b0851c;opacity:0.8"></div><div class="b" style="left:562.58px;top:120.38px;width:0.33px;height:1.4px;background:#1f1c1b;opacity:0.8"></div><div class="b" style="left:554.00px;top:122.72px;width:0.99px;height:1.4px;background:#0f6229;opacity:0.8"></div><div class="b" style="left:554.99px;top:122.72px;width:0.99px;height:1.4px;background:#6f6f6f;opacity:0.8"></div><div class="b" style="left:555.98px;top:122.72px;width:7.26px;height:1.4px;background:#1f7d40;opacity:0.8"></div><div class="b" style="left:563.24px;top:122.72px;width:0.33px;height:1.4px;background:#644a9b;opacity:0.8"></div><div class="b" style="left:563.57px;top:122.72px;width:2.64px;height:1.4px;background:#1f7d40;opacity:0.8"></div><div class="b" style="left:566.21px;top:122.72px;width:0.33px;height:1.4px;background:#1f1c1b;opacity:0.8"></div><div class="b" style="left:554.00px;top:125.06px;width:4.29px;height:1.4px;background:#0f6229;opacity:0.8"></div><div class="b" style="left:558.29px;top:125.06px;width:0.99px;height:1.4px;background:#6f6f6f;opacity:0.8"></div><div class="b" style="left:559.28px;top:125.06px;width:3.30px;height:1.4px;background:#1f7d40;opacity:0.8"></div><div class="b" style="left:562.58px;top:125.06px;width:0.66px;height:1.4px;background:#1f1c1b;opacity:0.8"></div><div class="b" style="left:554.00px;top:126.23px;width:4.29px;height:1.4px;background:#1f7d40;opacity:0.8"></div><div class="b" style="left:558.29px;top:126.23px;width:1.65px;height:1.4px;background:#644a9b;opacity:0.8"></div><div class="b" style="left:559.94px;top:126.23px;width:0.66px;height:1.4px;background:#1f1c1b;opacity:0.8"></div><div class="b" style="left:554.00px;top:128.57px;width:0.99px;height:1.4px;background:#1f7d40;opacity:0.8"></div><div class="b" style="left:554.99px;top:128.57px;width:1.65px;height:1.4px;background:#644a9b;opacity:0.8"></div><div class="b" style="left:556.64px;top:128.57px;width:0.33px;height:1.4px;background:#1f1c1b;opacity:0.8"></div><div class="b" style="left:556.97px;top:128.57px;width:0.99px;height:1.4px;background:#1f7d40;opacity:0.8"></div><div class="b" style="left:557.96px;top:128.57px;width:1.98px;height:1.4px;background:#644a9b;opacity:0.8"></div><div class="b" style="left:559.94px;top:128.57px;width:0.99px;height:1.4px;background:#1f1c1b;opacity:0.8"></div></div></body></html>
